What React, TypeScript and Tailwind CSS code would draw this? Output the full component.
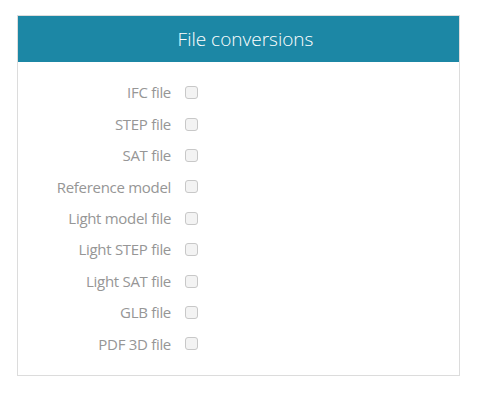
import React from "react";

const items = [
  "IFC file",
  "STEP file",
  "SAT file",
  "Reference model",
  "Light model file",
  "Light STEP file",
  "Light SAT file",
  "GLB file",
  "PDF 3D file",
];

export default function App() {
  return (
    <div className="w-[483px] h-[394px] bg-white pt-[15px] pl-[17px]" style={{ fontFamily: '"Open Sans", "Noto Sans", sans-serif' }}>
      <div className="w-[443px] h-[361px] border border-[#dcdcdc] flex flex-col">
        <div className="h-[46px] bg-[#1c87a5] flex items-center justify-center text-white text-[19px] font-light pl-[14px]">
          File conversions
        </div>
        <div className="flex flex-col pt-[15px]">
          {items.map((it) => (
            <div key={it} className="h-[31.4px] flex items-center">
              <div className="w-[153px] text-right text-[15px] text-[#969696] tracking-[-0.3px]">{it}</div>
              <div className="ml-[14px] w-[13px] h-[13px] rounded-[3px] border border-[#c8c8c8] bg-[#f3f3f3]" />
            </div>
          ))}
        </div>
      </div>
    </div>
  );
}
